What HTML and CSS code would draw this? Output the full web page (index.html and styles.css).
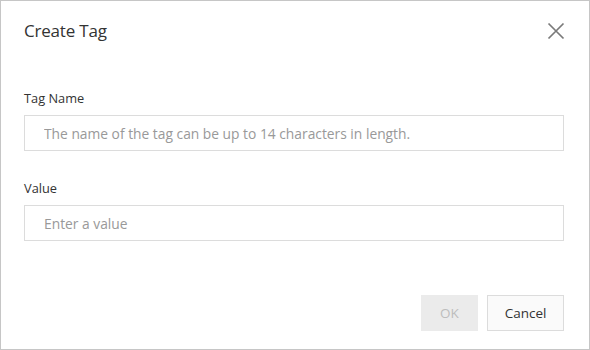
FILE: index.html
```html
<!DOCTYPE html>
<html>
<head>
<meta charset="utf-8">
<link rel="stylesheet" href="styles.css">
</head>
<body>
<div class="dialog">
  <div class="header">
    <h1 class="title">Create Tag</h1>
    <button class="close" aria-label="Close">
      <svg width="18" height="18" viewBox="0 0 18 18"><path d="M1.5 1.5 L16.5 16.5 M16.5 1.5 L1.5 16.5" stroke="#7a7a7a" stroke-width="1.7" fill="none"/></svg>
    </button>
  </div>
  <div class="body">
    <div class="field">
      <label class="label">Tag Name</label>
      <input class="input" placeholder="The name of the tag can be up to 14 characters in length.">
    </div>
    <div class="field">
      <label class="label">Value</label>
      <input class="input" placeholder="Enter a value">
    </div>
  </div>
  <div class="footer">
    <button class="btn btn-ok" disabled>OK</button>
    <button class="btn btn-cancel">Cancel</button>
  </div>
</div>
</body>
</html>
```
FILE: styles.css
```css
* { box-sizing: border-box; }
html, body { margin: 0; padding: 0; background: #fff; }
body { font-family: "Open Sans", "Noto Sans", sans-serif; color: #333; }
.dialog {
  width: 590px;
  height: 350px;
  border: 1px solid #c6c6c6;
  display: flex;
  flex-direction: column;
  padding: 0 25px 0 23px;
}
.header {
  display: flex;
  align-items: center;
  justify-content: space-between;
  height: 58px;
}
.title {
  margin: 0;
  font-weight: normal;
  font-size: 17px;
  color: #333;
  letter-spacing: -0.2px;
}
.close {
  border: 0;
  background: none;
  padding: 0;
  width: 18px;
  height: 18px;
  margin-right: -1px;
  margin-top: 1px;
  display: flex;
}
.body {
  display: flex;
  flex-direction: column;
  gap: 28px;
  padding-top: 30px;
}
.field { display: flex; flex-direction: column; gap: 8px; }
.label { font-size: 12.8px; color: #333; line-height: 18px; }
.input {
  width: 540px;
  height: 36px;
  border: 1px solid #dcdcdc;
  padding: 0 19px;
  font-family: inherit;
  font-size: 13.8px;
  color: #333;
  outline: none;
}
.input::placeholder { color: #999; }
.footer {
  margin-top: auto;
  display: flex;
  justify-content: flex-end;
  gap: 9px;
  padding-bottom: 18px;
}
.btn {
  height: 36px;
  font-family: inherit;
  font-size: 13.5px;
  border: 1px solid #dcdcdc;
}
.btn-ok { width: 57px; background: #ebebeb; border-color: #ebebeb; color: #bdbdbd; }
.btn-cancel { width: 77px; background: #fafafa; color: #333; }
```
